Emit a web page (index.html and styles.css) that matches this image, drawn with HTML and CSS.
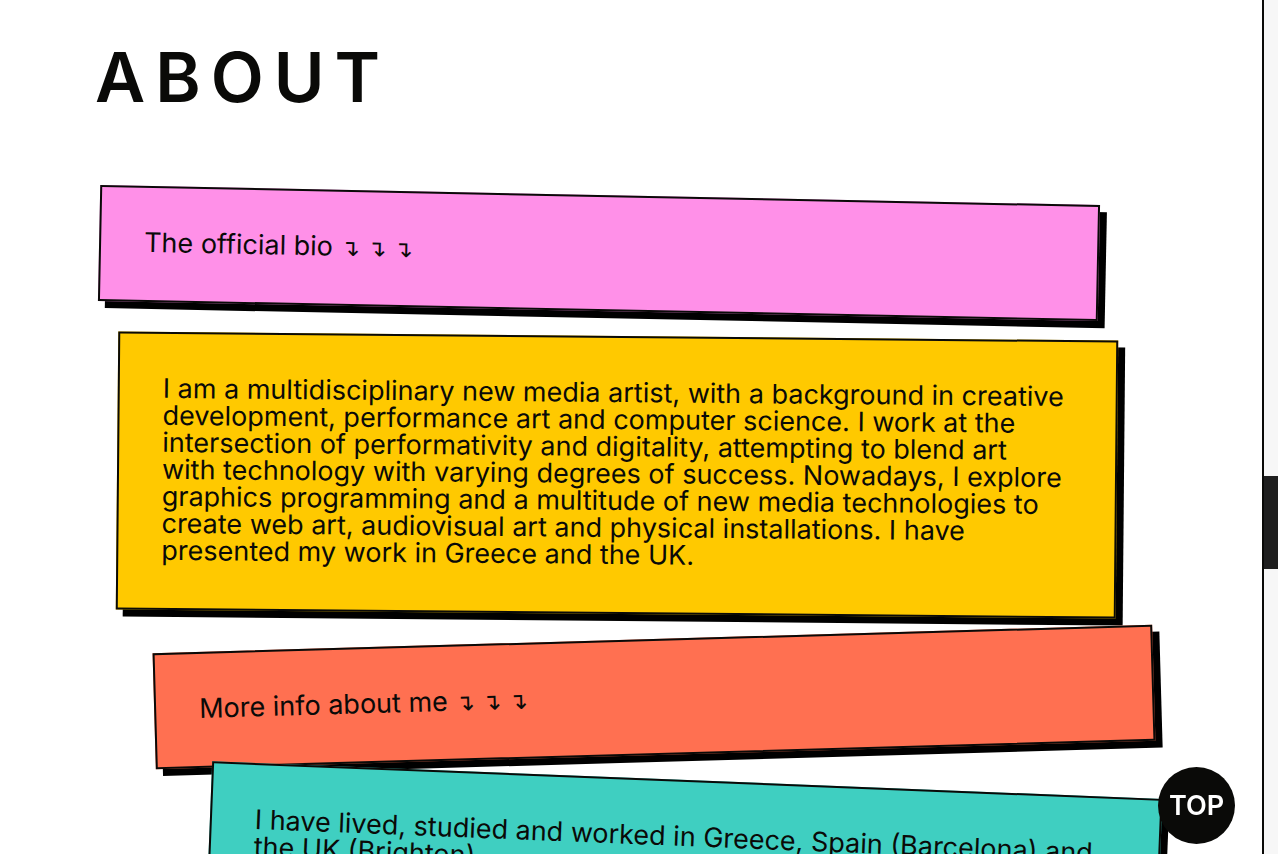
FILE: index.html
```
<!DOCTYPE html>
<html lang="en">
<head>
<meta charset="utf-8">
<meta name="viewport" content="width=device-width, initial-scale=1">
<title>About</title>
<link rel="stylesheet" href="styles.css">
</head>
<body>
<main class="page" id="top">
  <h1 class="title">ABOUT</h1>
  <div class="cards">
    <section class="card card-pink"><h2>The official bio <span class="arrows">↴ ↴ ↴</span></h2></section>
    <section class="card card-yellow"><p>I am a multidisciplinary new media artist, with a background in creative<br>development, performance art and computer science. I work at the<br>intersection of performativity and digitality, attempting to blend art<br>with technology with varying degrees of success. Nowadays, I explore<br>graphics programming and a multitude of new media technologies to<br>create web art, audiovisual art and physical installations. I have<br>presented my work in Greece and the UK.</p></section>
    <section class="card card-orange"><h2>More info about me <span class="arrows">↴ ↴ ↴</span></h2></section>
    <section class="card card-teal"><p>I have lived, studied and worked in Greece, Spain (Barcelona) and<br>the UK (Brighton).</p></section>
  </div>
</main>
<div class="scrollbar" aria-hidden="true"><div class="thumb"></div></div>
<a class="to-top" href="#top">TOP</a>
</body>
</html>
```
FILE: styles.css
```
* { box-sizing: border-box; }
body {
  margin: 0;
  height: 100vh;
  display: flex;
  overflow: hidden;
  background: #fff;
  color: #0a0a08;
  font-family: Inter, "Liberation Sans", sans-serif;
}
.page {
  flex: 1;
  min-width: 0;
  overflow: hidden;
  padding: 36px 102px 0 95px;
}
.title {
  margin: 0;
  font-size: 69px;
  line-height: 83px;
  font-weight: 600;
  letter-spacing: 10px;
}
.cards {
  display: flex;
  flex-direction: column;
  gap: 25px;
  padding: 76px 0 0 4px;
}
.card {
  max-width: 1000px;
  padding: 41px 20px 44px 43px;
  border: 2px solid #0a0a08;
  box-shadow: 7px 7px 0 #000;
}
.card h2, .card p {
  margin: 0;
  font-size: 27px;
  line-height: 27px;
  font-weight: 400;
}
.card .arrows { font-family: "DejaVu Sans", sans-serif; font-size: 23px; line-height: 1px; }
.card-pink { background: #ff90e8; transform: rotate(1.15deg); }
.card-yellow { background: #ffc900; margin-left: 18px; transform: rotate(0.52deg); }
.card-orange { background: #ff7051; margin-left: 55px; transform: rotate(-1.63deg); }
.card-teal { background: #3fcfc1; margin-left: 110px; transform: rotate(2.27deg); }
.scrollbar {
  width: 16px;
  border-left: 2px solid #0a0a08;
  background: #f7f7f7;
  display: grid;
  grid-template-rows: 476fr 93fr 285fr;
}
.thumb { grid-row: 2; background: #1f1f1f; }
.to-top {
  position: fixed;
  right: 43px;
  bottom: 10px;
  width: 77px;
  height: 77px;
  border-radius: 50%;
  display: grid;
  place-items: center;
  background: #0a0a08;
  color: #fff;
  font-size: 27px;
  font-weight: 600;
  text-decoration: none;
}
```
